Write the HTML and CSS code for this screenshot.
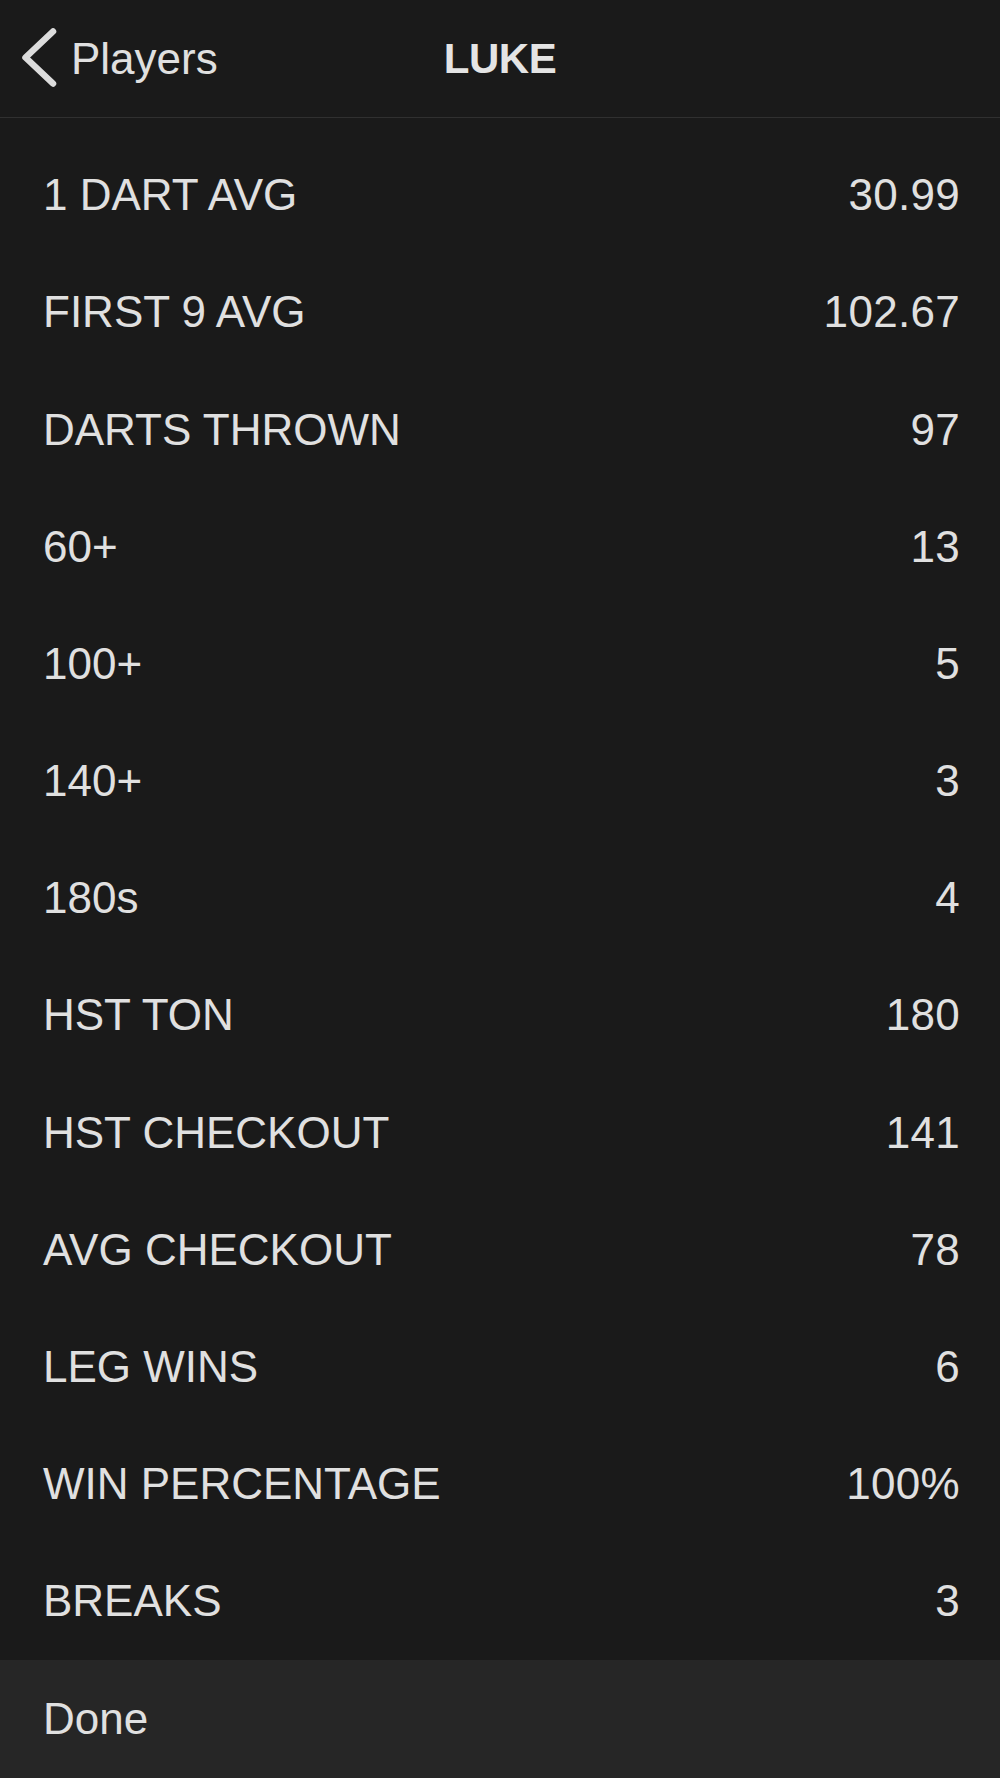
FILE: index.html
```html
<!DOCTYPE html>
<html lang="en">
<head>
<meta charset="utf-8">
<title>LUKE</title>
<link rel="stylesheet" href="styles.css">
</head>
<body>
<div class="page">
  <header class="nav">
    <div class="back">
      <svg class="chev" width="40" height="62" viewBox="0 0 40 62" aria-hidden="true">
        <path d="M34 3.5 L6.5 29.5 L34 55.5" fill="none" stroke="#dcdcdc" stroke-width="6.5" stroke-linecap="round" stroke-linejoin="round"/>
      </svg>
      <span class="back-label">Players</span>
    </div>
    <div class="title">LUKE</div>
    <div class="spacer"></div>
  </header>
  <main class="stats">
    <div class="row"><span class="label">1 DART AVG</span><span class="value">30.99</span></div>
    <div class="row"><span class="label">FIRST 9 AVG</span><span class="value">102.67</span></div>
    <div class="row"><span class="label">DARTS THROWN</span><span class="value">97</span></div>
    <div class="row"><span class="label">60+</span><span class="value">13</span></div>
    <div class="row"><span class="label">100+</span><span class="value">5</span></div>
    <div class="row"><span class="label">140+</span><span class="value">3</span></div>
    <div class="row"><span class="label">180s</span><span class="value">4</span></div>
    <div class="row"><span class="label">HST TON</span><span class="value">180</span></div>
    <div class="row"><span class="label">HST CHECKOUT</span><span class="value">141</span></div>
    <div class="row"><span class="label">AVG CHECKOUT</span><span class="value">78</span></div>
    <div class="row"><span class="label">LEG WINS</span><span class="value">6</span></div>
    <div class="row"><span class="label">WIN PERCENTAGE</span><span class="value">100%</span></div>
    <div class="row"><span class="label">BREAKS</span><span class="value">3</span></div>
  </main>
  <footer class="done-bar">
    <span class="done">Done</span>
  </footer>
</div>
</body>
</html>
```

FILE: styles.css
```css
html, body {
  margin: 0;
  padding: 0;
  background: #1a1a1a;
}

body {
  font-family: "Liberation Sans", Arial, Helvetica, sans-serif;
  color: #e0e0e0;
  font-size: 44px;
}

.page {
  width: 1000px;
  height: 1778px;
  display: flex;
  flex-direction: column;
  overflow: hidden;
}

.nav {
  height: 117px;
  border-bottom: 1px solid #303030;
  display: grid;
  grid-template-columns: 1fr auto 1fr;
  align-items: center;
  box-sizing: content-box;
  padding-top: 1px;
}

.back {
  display: flex;
  align-items: center;
  padding-left: 19px;
  gap: 12px;
}

.chev {
  display: block;
  flex: none;
}

.back-label {
  font-size: 44px;
  color: #e0e0e0;
}

.title {
  font-weight: bold;
  font-size: 42px;
  letter-spacing: -0.5px;
  color: #e4e4e4;
}

.stats {
  padding-top: 19px;
  flex: 1;
}

.row {
  height: 117.2px;
  display: flex;
  align-items: center;
  justify-content: space-between;
  padding: 0 40px 0 43px;
}

.value {
  letter-spacing: 0.3px;
}

.done-bar {
  height: 118px;
  background: #262626;
  display: flex;
  align-items: center;
  padding-left: 43px;
  flex: none;
}
```
